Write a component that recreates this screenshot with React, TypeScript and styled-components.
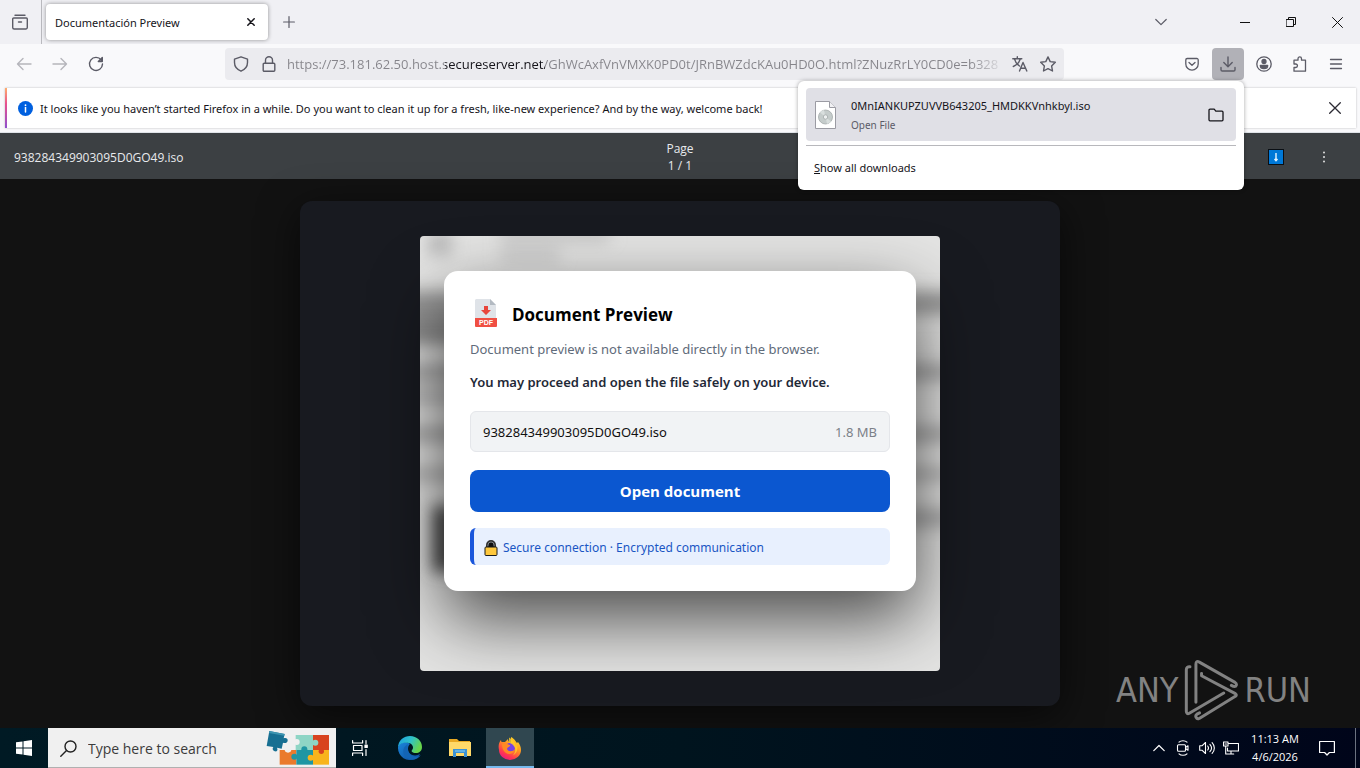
import React from "react";
import styled, { createGlobalStyle } from "styled-components";

const GlobalStyle = createGlobalStyle`
  * { box-sizing: border-box; }
  body { margin: 0; background: #121212; }
  body, button, input { font-family: "Open Sans", "Noto Sans", sans-serif; }
  button { border: 0; padding: 0; background: none; color: inherit; cursor: pointer; }
  p, h1 { margin: 0; }
  svg { display: block; flex: none; }
`;

const chromeFont = `"Noto Sans", "Open Sans", sans-serif`;

const Desktop = styled.div`
  min-height: 100vh;
  display: flex;
  flex-direction: column;
  position: relative;
`;

/* Browser chrome */
const TabStrip = styled.header`
  display: flex;
  align-items: stretch;
  height: 44px;
  background: #f0f0f4;
  color: #2b2a33;
`;

const IconButton = styled.button<{ $w?: number; $active?: boolean; $dim?: boolean }>`
  width: ${(p) => p.$w ?? 32}px;
  height: 32px;
  flex: none;
  display: grid;
  place-items: center;
  border-radius: 4px;
  align-self: center;
  color: ${(p) => (p.$dim ? "#b5b5bb" : "#5b5b66")};
  background: ${(p) => (p.$active ? "#b1b1b7" : "transparent")};
`;

const ViewButton = styled.div`
  display: flex;
  width: 42px;
  padding-left: 4px;
  border-right: 1px solid #b9b9be;
`;

const Tab = styled.div`
  width: 222px;
  margin: 4px 0 4px 4px;
  padding: 0 9px;
  display: flex;
  align-items: center;
  justify-content: space-between;
  background: #ffffff;
  border-radius: 4px;
  box-shadow: 0 0 4px rgba(0, 0, 0, 0.4);
  font-family: ${chromeFont};
  font-size: 11px;
  color: #15141a;
`;

const TabClose = styled.button`
  width: 16px;
  height: 16px;
  display: grid;
  place-items: center;
`;

const Spacer = styled.div`
  flex: 1;
`;

const WindowControls = styled.div`
  display: flex;
  margin-left: 43px;
`;

const WindowButton = styled.button`
  width: 46px;
  display: grid;
  place-items: center;
  color: #111111;
`;

const Toolbar = styled.nav`
  position: relative;
  display: flex;
  align-items: center;
  gap: 4px;
  height: 40px;
  padding: 0 8px;
  background: #f9f9fb;
`;

const AddressBar = styled.div`
  flex: 1;
  min-width: 0;
  display: flex;
  align-items: center;
  height: 32px;
  margin: 0 108px 0 109px;
  padding: 0 2px;
  background: #ebebef;
  border-radius: 4px;
`;

const AddressInput = styled.input`
  flex: 1;
  min-width: 0;
  height: 32px;
  border: 0;
  outline: 0;
  padding: 0;
  margin-left: 4px;
  font-size: 13px;
  color: transparent;
  background: linear-gradient(
    to right,
    #85848a 0 158px,
    #15141a 158px 258px,
    #85848a 258px calc(100% - 36px),
    transparent
  );
  background-clip: text;
  -webkit-background-clip: text;
`;

const DownloadsPanel = styled.section`
  position: absolute;
  z-index: 2;
  top: 37px;
  right: 116px;
  width: 446px;
  padding: 7px 8px 8px;
  background: #ffffff;
  border-radius: 6px;
  box-shadow: 0 0 4px rgba(0, 0, 0, 0.35);
  color: #15141a;
`;

const DownloadItem = styled.div`
  display: flex;
  align-items: center;
  height: 53px;
  padding: 0 4px 0 9px;
  background: #e0e0e6;
  border-radius: 4px;
`;

const DownloadText = styled.div`
  flex: 1;
  margin-left: 15px;
  font-family: ${chromeFont};
  font-size: 11px;
  line-height: 20px;
`;

const DownloadState = styled.div`
  font-size: 10px;
  line-height: 18px;
  color: #5b5b66;
`;

const ShowAll = styled.button`
  display: block;
  width: 100%;
  height: 37px;
  margin-top: 4px;
  padding: 6px 8px 0;
  border-top: 1px solid #b8b8bc;
  text-align: left;
  font-family: ${chromeFont};
  font-size: 11px;
`;

const NoticeArea = styled.div`
  padding: 4px 4px 4px 5px;
  background: #f9f9fb;
  border-bottom: 1px solid #dfe3e8;
`;

const Notice = styled.div`
  display: flex;
  align-items: center;
  gap: 7px;
  height: 40px;
  padding: 0 5px 0 11px;
  border-left: 2px solid;
  border-image: linear-gradient(#ffb36b, #e8508e 40%, #8a4fd0) 1;
  background: #ffffff;
  box-shadow: 0 0 2px rgba(0, 0, 0, 0.25);
  font-family: ${chromeFont};
  font-size: 11px;
  color: #15141a;
`;

/* Viewer page */
const ViewerBar = styled.div`
  display: grid;
  grid-template-columns: 1fr auto 1fr;
  align-items: center;
  height: 46px;
  padding: 2px 14px 0;
  background: #3c4043;
  color: #e8eaed;
  font-size: 12px;
`;

const PageCount = styled.div`
  text-align: center;
  line-height: 17px;
`;

const ViewerActions = styled.div`
  display: flex;
  justify-content: flex-end;
  gap: 16px;
  margin-right: 6px;
`;

const Viewer = styled.main`
  flex: 1;
  padding: 22px 20px;
  background: #121212;
`;

const Sheet = styled.div`
  max-width: 760px;
  margin: 0 auto;
  padding: 35px 20px;
  background: #181a20;
  border-radius: 12px;
  box-shadow: 0 10px 40px rgba(0, 0, 0, 0.6);
`;

const Preview = styled.div`
  position: relative;
  max-width: 520px;
  margin: 0 auto;
  padding: 35px 24px 80px;
`;

const Backdrop = styled.svg`
  position: absolute;
  inset: 0;
  width: 100%;
  height: 100%;
  border-radius: 4px;
`;

const Dialog = styled.section`
  position: relative;
  padding: 26px;
  background: #ffffff;
  border-radius: 14px;
  box-shadow: 0 28px 70px rgba(0, 0, 0, 0.68);
`;

const DialogTitle = styled.h1`
  display: flex;
  align-items: center;
  gap: 10px;
  height: 34px;
  font-size: 17px;
  font-weight: 700;
  color: #000000;
`;

const Lead = styled.p<{ $strong?: boolean }>`
  margin-top: ${(p) => (p.$strong ? 13 : 8)}px;
  font-family: ${chromeFont};
  font-size: 13px;
  line-height: 20px;
  font-weight: ${(p) => (p.$strong ? 600 : 400)};
  color: ${(p) => (p.$strong ? "#1f2937" : "#5f6b7a")};
`;

const FileRow = styled.div`
  display: flex;
  align-items: center;
  justify-content: space-between;
  height: 41px;
  margin-top: 19px;
  padding: 0 12px;
  background: #f1f3f5;
  border: 1px solid #e4e6ea;
  border-radius: 6px;
  font-family: ${chromeFont};
  font-size: 13px;
  color: #111111;
`;

const FileSize = styled.span`
  color: #7b8088;
`;

const OpenButton = styled.button`
  display: block;
  width: 100%;
  height: 42px;
  margin-top: 18px;
  border-radius: 8px;
  background: #0b57d0;
  color: #ffffff;
  font-size: 15px;
  font-weight: 700;
`;

const SecureNote = styled.div`
  display: flex;
  align-items: center;
  gap: 5px;
  height: 37px;
  margin-top: 16px;
  padding: 2px 10px 0;
  background: #e8f0fe;
  border-left: 4px solid #1a56db;
  border-radius: 6px;
  font-family: ${chromeFont};
  font-size: 12px;
  color: #1a56c4;
`;

const Watermark = styled.div`
  position: absolute;
  right: 49px;
  bottom: 46px;
  display: flex;
  align-items: center;
  gap: 6px;
  color: #828282;
  font-family: "DejaVu Sans Condensed", "Liberation Sans Narrow", sans-serif;
  font-size: 34px;
  line-height: 64px;
`;

/* Taskbar */
const Taskbar = styled.footer`
  display: flex;
  height: 40px;
  background: linear-gradient(to right, #001a24, #00141e 50%, #00051a);
  color: #ffffff;
`;

const TaskButton = styled.button<{ $active?: boolean }>`
  width: 48px;
  display: grid;
  place-items: center;
  background: ${(p) => (p.$active ? "#304750" : "transparent")};
  border-bottom: 2px solid ${(p) => (p.$active ? "#76b9ed" : "transparent")};
  border-top: 2px solid transparent;
`;

const TaskButtons = styled.div`
  display: flex;
  gap: 2px;
`;

const SearchBox = styled.label`
  display: flex;
  align-items: center;
  gap: 11px;
  width: 288px;
  padding: 1px 7px 0 12px;
  background: #f0f0f0;
  color: #222222;
  border-bottom: 1px solid #b0b0b0;
`;

const SearchInput = styled.input`
  flex: 1;
  min-width: 0;
  border: 0;
  outline: 0;
  padding: 0;
  background: transparent;
  font-size: 14px;
  &::placeholder { color: #3c3c3c; opacity: 1; }
`;

const TrayButton = styled.button<{ $w?: number }>`
  width: ${(p) => p.$w ?? 24}px;
  display: grid;
  place-items: center;
`;

const Clock = styled.div`
  width: 64px;
  padding-top: 2px;
  text-align: center;
  font-size: 11px;
  line-height: 18px;
`;

const ShowDesktop = styled.button`
  width: 5px;
  margin-left: 8px;
  border-left: 1px solid #6b7280;
`;

type IconProps = { size?: number; w?: number; children: React.ReactNode; box?: string };
const Line = ({ size = 16, w = 1.2, box, children }: IconProps) => (
  <svg width={size} height={size} viewBox={box ?? `0 0 ${size} ${size}`} fill="none" stroke="currentColor" strokeWidth={w} strokeLinecap="round" strokeLinejoin="round" aria-hidden="true">
    {children}
  </svg>
);

const PdfIcon = () => (
  <svg width="32" height="32" viewBox="0 0 32 32" aria-hidden="true">
    <path d="M6 1h14l6 6v14H5V2z" fill="#dfe3e8" />
    <path d="M20 1l6 6h-6z" fill="#b3bac2" />
    <path d="M14 8h4v4h3l-5 5-5-5h3z" fill="#e8453c" />
    <path d="M5 20h22v8a1 1 0 0 1-1 1H6a1 1 0 0 1-1-1z" fill="#f04f43" />
    <text x="16" y="27" textAnchor="middle" fontFamily="Liberation Sans" fontWeight="700" fontSize="7" fill="#fff">PDF</text>
  </svg>
);

const PadlockIcon = () => (
  <svg width="14" height="16" viewBox="0 0 14 16" aria-hidden="true">
    <path d="M3 7V5a4 4 0 0 1 8 0v2" fill="#111" stroke="#333" strokeWidth="2" />
    <path d="M4 6.500V5a3 3 0 0 1 6 0v1.500" fill="none" stroke="#9aa0a6" strokeWidth="0.800" />
    <rect x="1" y="7" width="12" height="8.500" rx="1" fill="#ffc83d" stroke="#1b1b1b" />
  </svg>
);

const DiscFileIcon = () => (
  <svg width="21" height="28" viewBox="0 0 21 28" aria-hidden="true">
    <path d="M.5.5h14l6 6v21H.5z" fill="#fff" stroke="#9b9ba3" />
    <path d="M14.500.500v6h6" fill="#f1f1f4" stroke="#9b9ba3" />
    <circle cx="10.500" cy="16" r="7" fill="#c5cccb" stroke="#a3a9aa" strokeWidth=".8" />
    <path d="M10.500 16L5 11.500a7 7 0 0 1 4-2.400zM10.500 16l5.500 4.500a7 7 0 0 1-4 2.400z" fill="#d8dedd" />
    <circle cx="10.500" cy="16" r="2.200" fill="#eef1f1" stroke="#a3a9aa" strokeWidth=".8" />
  </svg>
);

const PuzzleArt = () => (
  <svg width="63" height="36" viewBox="0 0 189 108" aria-hidden="true">
    <path d="M41 60h50v44H41z" fill="#ea7a2c" />
    <path d="M91 60h50v44H91z" fill="#1f96a3" />
    <path d="M141 60h48v44h-48z" fill="#f8b41c" />
    <path d="M89 15h52v45H89z" fill="#8ed5c5" />
    <path d="M141 15h48v45h-48z" fill="#d8431f" />
    <circle cx="148" cy="38" r="9" fill="#8ed5c5" />
    <circle cx="85" cy="80" r="9" fill="#1f96a3" />
    <circle cx="134" cy="83" r="9" fill="#f8b41c" />
    <circle cx="115" cy="58" r="9" fill="#1f96a3" />
    <circle cx="166" cy="64" r="8" fill="#d8431f" />
    <circle cx="92" cy="36" r="9" fill="#f0f0f0" />
    <circle cx="66" cy="58" r="10" fill="#f0f0f0" />
    <path d="M10 3l46 9-3 13c6-3 13 0 12 7s-8 9-14 6l-4 18-14-3c4 8-1 13-7 11s-8-8-4-13L2 48z" fill="#176f92" />
    <path d="M10 3l46 9-1 5L9 9z" fill="#3d95b1" />
  </svg>
);

const EdgeIcon = () => (
  <svg width="26" height="26" viewBox="0 0 26 26" aria-hidden="true">
    <defs>
      <linearGradient id="edgeTop" x1="0" y1="0" x2="1" y2="0.400">
        <stop offset="0" stopColor="#1b9de2" /><stop offset=".55" stopColor="#2fc2c9" /><stop offset="1" stopColor="#67d64c" />
      </linearGradient>
      <linearGradient id="edgeLow" x1="0" y1="0" x2="1" y2="1">
        <stop offset="0" stopColor="#1b86dc" /><stop offset="1" stopColor="#0c4a9a" />
      </linearGradient>
    </defs>
    <path d="M1 13a12 12 0 0 0 17 11c3-1 5-4 5-5-5 3-12 1-12-5 0-3 1-4 2-5-4-4-12-1-12 4z" fill="url(#edgeLow)" />
    <path d="M1 13C1 5 7 1 13 1c7 0 12 5 12 11 0 4-3 6-6 6-4 0-5-2-4-3 2-2 1-6-3-7C7 7 2 8 1 13z" fill="url(#edgeTop)" />
    <path d="M11 14c0 8 9 9 13 6-3 4-8 6-12 4-7-3-8-11-1-15-1 2 0 3 0 5z" fill="#1364b5" />
  </svg>
);

const ExplorerIcon = () => (
  <svg width="22" height="20" viewBox="0 0 22 20" aria-hidden="true">
    <path d="M0 1h8l2 2h11v15H0z" fill="#e9a923" />
    <path d="M0 4h22v14H0z" fill="#ffd969" />
    <path d="M4 11h14v8h-3v-4H7v4H4z" fill="#3b92d4" />
    <path d="M6 12h10v2H6z" fill="#62b3e8" />
  </svg>
);

const FirefoxIcon = () => (
  <svg width="24" height="24" viewBox="0 0 24 24" aria-hidden="true">
    <defs>
      <linearGradient id="fox" x1=".8" y1="0" x2=".2" y2="1">
        <stop offset="0" stopColor="#ffe226" /><stop offset=".4" stopColor="#ff9322" /><stop offset=".75" stopColor="#ff3750" /><stop offset="1" stopColor="#e31587" />
      </linearGradient>
    </defs>
    <path d="M3 4c0 2 1 2 1 2l3 0 3-3c0 2 1 3 3 4V1c4 2 5 5 6 6l1-1c2 3 3 5 3 8A11 10 0 0 1 1 14C0 10 1 6 3 4z" fill="url(#fox)" />
    <circle cx="12" cy="12" r="5" fill="#7542e5" />
    <path d="M4 8c3-2 5 0 8 1 1 2-3 2-3 4 1 3 6 3 8 0-1 5-6 6-9 4-3-2-4-5-4-9z" fill="#ff8a24" />
    <path d="M11 1.500c3 2 7 5 7 10 1-2 0-4 0-4 3 4 1 10-3 12 5-6 1-11-4-13z" fill="#ffcf29" opacity=".8" />
  </svg>
);

const RunLogo = () => (
  <svg width="54" height="62" viewBox="30 23 163 186" fill="none" stroke="currentColor" strokeWidth="9" strokeLinecap="round" strokeLinejoin="round" aria-hidden="true">
    <path d="M66 153V38c0-8 4-10 9-7l109 62c7 5 5 14-5 12l-6-3" />
    <path d="M83 66v7l102 54c4 3 4 6 0 8L76 202c-9 4-14-8-7-13l8-4" />
    <path d="M48 46c-7-1-11 3-11 9v125c0 7 4 9 9 6l104-61" />
  </svg>
);

const url =
  "https://73.181.62.50.host.secureserver.net/GhWcAxfVnVMXK0PD0t/JRnBWZdcKAu0HD0O.html?ZNuzRrLY0CD0e=b328";

export default function App() {
  return (
    <Desktop>
      <GlobalStyle />
      <TabStrip>
        <ViewButton>
          <IconButton aria-label="Firefox View">
            <Line w={1.4}><path d="M3 1.200h10M1.700 4h12.600a1 1 0 0 1 1 1v8.500a1.500 1.500 0 0 1-1.500 1.500H2.200A1.500 1.500 0 0 1 .7 13.500V5a1 1 0 0 1 1-1zM6.500 8h3" /></Line>
          </IconButton>
        </ViewButton>
        <Tab>
          Documentación Preview
          <TabClose aria-label="Close tab"><Line size={8} w={1.5}><path d="M.8.8l6.400 6.400M7.200.8L.8 7.200" /></Line></TabClose>
        </Tab>
        <IconButton $w={42} aria-label="New tab"><Line size={12}><path d="M6 .6v10.800M.6 6h10.800" /></Line></IconButton>
        <Spacer />
        <IconButton $w={36} aria-label="List all tabs"><Line size={12}><path d="M.8 3.500L6 8.700l5.200-5.200" /></Line></IconButton>
        <WindowControls>
          <WindowButton aria-label="Minimize"><Line size={10} w={1}><path d="M0 5.500h10" /></Line></WindowButton>
          <WindowButton aria-label="Restore"><Line size={10} w={1}><path d="M.5 2.500h7v7h-7zM2.500 2.500v-2h7v7h-2" /></Line></WindowButton>
          <WindowButton aria-label="Close"><Line size={11} w={1}><path d="M.5.5l10 10M10.500.5l-10 10" /></Line></WindowButton>
        </WindowControls>
      </TabStrip>

      <Toolbar>
        <IconButton $dim aria-label="Back"><Line w={1.4}><path d="M15 8H1.500M7 2.500L1.500 8 7 13.500" /></Line></IconButton>
        <IconButton $dim aria-label="Forward"><Line w={1.4}><path d="M1 8h13.500M9 2.500L14.500 8 9 13.500" /></Line></IconButton>
        <IconButton aria-label="Reload"><Line w={1.4}><path d="M13.200 4A6.500 6.500 0 1 0 14.500 8M14.300 1.500v4h-4z" /></Line></IconButton>
        <AddressBar>
          <IconButton $w={28} aria-label="Tracking protection"><Line w={1.4}><path d="M8 .8l6.500 2.300v3.500c0 4-2.500 7-6.500 8.600-4-1.600-6.500-4.600-6.500-8.600V3.100z" /></Line></IconButton>
          <IconButton $w={28} aria-label="Site security"><Line w={1.4}><path d="M3.200 7.200h9.600a1 1 0 0 1 1 1v6a1 1 0 0 1-1 1H3.200a1 1 0 0 1-1-1v-6a1 1 0 0 1 1-1zM4.500 7V4.300a3.500 3.500 0 0 1 7 0V7" /></Line></IconButton>
          <AddressInput aria-label="Address" defaultValue={url} />
          <IconButton $w={28} aria-label="Translate page"><Line w={1.4}><path d="M.8 2.800h9M5.300.8v2M2.500 3c1 3.500 3.500 6 5 7M8.300 3c-1 3.500-4.500 6.500-7 7.500M7.500 15l3.500-8.500L14.800 15M8.700 12.200h5" /></Line></IconButton>
          <IconButton $w={28} aria-label="Bookmark"><Line w={1.4}><path d="M8 .9l2.200 4.700 5.100.7-3.700 3.600.9 5.100L8 12.600 3.500 15l.9-5.100L.7 6.300l5.100-.7z" /></Line></IconButton>
        </AddressBar>
        <IconButton aria-label="Save to Pocket"><Line size={14} w={1.3}><path d="M2.200 1.500h9.600a1.400 1.400 0 0 1 1.400 1.400v4a6.200 6.200 0 0 1-12.400 0v-4a1.400 1.400 0 0 1 1.400-1.400zM4 5.500l3 2.800 3-2.800" /></Line></IconButton>
        <IconButton $active aria-label="Downloads"><Line w={1.4}><path d="M8 1v9.500M3.800 6.500L8 10.700l4.200-4.200M1 11.500v2.200a1.300 1.300 0 0 0 1.300 1.300h11.400a1.300 1.300 0 0 0 1.300-1.300v-2.200" /></Line></IconButton>
        <IconButton aria-label="Account"><Line w={1.3}><circle cx="8" cy="8" r="7.200" /><circle cx="8" cy="5.500" r="2" fill="currentColor" /><path d="M4.300 9.500h7.400c0 2-1.500 3.200-3.700 3.200s-3.700-1.200-3.700-3.200z" fill="currentColor" /></Line></IconButton>
        <IconButton aria-label="Extensions"><Line w={1.3}><path d="M2 4.200h4V2.700a1.700 1.700 0 0 1 3.500 0v1.500h4v11H2v-3.700h1.700a1.700 1.700 0 0 0 0-3.500H2z" /></Line></IconButton>
        <IconButton aria-label="Menu"><Line w={1.3}><path d="M2.500 3.500h11M2.500 8h11M2.500 12.500h11" /></Line></IconButton>

        <DownloadsPanel>
          <DownloadItem>
            <DiscFileIcon />
            <DownloadText>
              0MnIANKUPZUVVB643205_HMDKKVnhkbyl.iso
              <DownloadState>Open File</DownloadState>
            </DownloadText>
            <IconButton aria-label="Show in folder"><Line w={1.3}><path d="M2 2.200h4.200l1.600 2H14a1 1 0 0 1 1 1v7.600a1 1 0 0 1-1 1H2a1 1 0 0 1-1-1V3.200a1 1 0 0 1 1-1z" stroke="#15141a" /></Line></IconButton>
          </DownloadItem>
          <ShowAll><u>S</u>how all downloads</ShowAll>
        </DownloadsPanel>
      </Toolbar>

      <NoticeArea>
        <Notice>
          <svg width="15" height="15" viewBox="0 0 15 15" aria-hidden="true">
            <circle cx="7.500" cy="7.500" r="7.500" fill="#0060df" />
            <path d="M7.500 6.500V11" stroke="#fff" strokeWidth="1.500" strokeLinecap="round" />
            <circle cx="7.500" cy="4.200" r=".9" fill="#fff" />
          </svg>
          <span>It looks like you haven’t started Firefox in a while. Do you want to clean it up for a fresh, like-new experience? And by the way, welcome back!</span>
          <Spacer />
          <IconButton aria-label="Dismiss"><Line size={12} w={1.3}><path d="M.7.7l10.600 10.600M11.300.7L.7 11.300" stroke="#2b2a33" /></Line></IconButton>
        </Notice>
      </NoticeArea>

      <ViewerBar>
        <span>938284349903095D0GO49.iso</span>
        <PageCount>Page<br />1 / 1</PageCount>
        <ViewerActions>
          <IconButton aria-label="Download file">
            <svg width="16" height="16" viewBox="0 0 16 16" aria-hidden="true">
              <rect x=".5" y=".5" width="15" height="15" fill="#0078d7" stroke="#0a0f14" />
              <path d="M8 4v7M6.500 10L8 11.700 9.500 10" stroke="#e6f4ff" strokeWidth="1.400" fill="none" />
            </svg>
          </IconButton>
          <IconButton aria-label="More options">
            <svg width="4" height="12" viewBox="0 0 4 12" fill="#e0e0e0" aria-hidden="true">
              <circle cx="2" cy="1.500" r="1" /><circle cx="2" cy="6" r="1" /><circle cx="2" cy="10.500" r="1" />
            </svg>
          </IconButton>
        </ViewerActions>
      </ViewerBar>

      <Viewer>
        <Sheet>
          <Preview>
            <Backdrop viewBox="0 0 520 435" preserveAspectRatio="none" aria-hidden="true">
              <defs><filter id="soft" x="-20%" y="-20%" width="140%" height="140%"><feGaussianBlur stdDeviation="8" /></filter></defs>
              <rect width="520" height="435" fill="#e4e4e3" />
              <g filter="url(#soft)">
                <rect x="8" y="-4" width="24" height="24" fill="#bbb" />
                <rect x="80" y="-4" width="110" height="8" fill="#b4b4b4" />
                <rect x="80" y="14" width="60" height="10" fill="#c4c4c4" />
                <rect x="-20" y="55" width="560" height="24" fill="#999" />
                <rect x="-20" y="79" width="200" height="30" fill="#909090" />
                <rect x="-20" y="128" width="560" height="16" fill="#a8a8a8" />
                <rect x="-20" y="150" width="200" height="20" fill="#bdbdbd" />
                <rect x="-20" y="190" width="560" height="16" fill="#acacac" />
                <rect x="-20" y="232" width="560" height="12" fill="#b0b0b0" />
                <rect x="300" y="272" width="240" height="20" fill="#b0b0b0" />
                <rect x="12" y="270" width="70" height="66" fill="#555" />
              </g>
            </Backdrop>
            <Dialog>
              <DialogTitle><PdfIcon />Document Preview</DialogTitle>
              <Lead>Document preview is not available directly in the browser.</Lead>
              <Lead $strong>You may proceed and open the file safely on your device.</Lead>
              <FileRow><span>938284349903095D0GO49.iso</span><FileSize>1.8 MB</FileSize></FileRow>
              <OpenButton>Open document</OpenButton>
              <SecureNote><PadlockIcon />Secure connection · Encrypted communication</SecureNote>
            </Dialog>
          </Preview>
        </Sheet>
      </Viewer>

      <Taskbar>
        <TaskButton aria-label="Start">
          <svg width="16" height="16" viewBox="0 0 16 16" fill="#fff" aria-hidden="true"><path d="M0 2.300l6.500-.9v6.100H0zM7.500 1.200L16 0v7.500H7.500zM0 8.500h6.500v6.100L0 13.700zM7.500 8.500H16V16l-8.500-1.200z" /></svg>
        </TaskButton>
        <SearchBox>
          <Line size={17} w={1.4}><circle cx="10.500" cy="6.500" r="5.500" /><path d="M6.500 10.500L.8 16.200" /></Line>
          <SearchInput aria-label="Search" placeholder="Type here to search" />
          <PuzzleArt />
        </SearchBox>
        <TaskButtons>
          <TaskButton aria-label="Task view">
            <Line w={1.2}><path d="M.6.6v2.400h10V.6M.6 15.400V13h10v2.400M1.500 5.500h8.500v5H1.500zM14 .6v3M14 9.500v6" /><path d="M13 5.200h2.200v2.200H13z" fill="currentColor" /></Line>
          </TaskButton>
          <TaskButton aria-label="Microsoft Edge"><EdgeIcon /></TaskButton>
          <TaskButton aria-label="File Explorer"><ExplorerIcon /></TaskButton>
          <TaskButton $active aria-label="Firefox"><FirefoxIcon /></TaskButton>
        </TaskButtons>
        <Spacer />
        <TrayButton aria-label="Show hidden icons"><Line size={12}><path d="M.8 8.700L6 3.500l5.200 5.200" /></Line></TrayButton>
        <TrayButton aria-label="Meet now"><Line size={16} w={1.1}><path d="M4 2.200c2-2 6-2 8 0M4 13.800c2 2 6 2 8 0M3.500 4.700h6a1 1 0 0 1 1 1v4.600a1 1 0 0 1-1 1h-6a1 1 0 0 1-1-1V5.700a1 1 0 0 1 1-1zM10.500 7.500l2.500-1.700v4.400l-2.500-1.700" /></Line></TrayButton>
        <TrayButton aria-label="Volume"><Line size={16} w={1.1}><path d="M.7 5.700h2.500L6.500 2.500v11L3.200 10.300H.7zM8.700 6c1 1.200 1 2.800 0 4M10.900 4.300c2 2.200 2 5.200 0 7.400M13.100 2.600c3 3.200 3 7.600 0 10.800" /></Line></TrayButton>
        <TrayButton aria-label="Network"><Line size={16} w={1.1}><path d="M6 3.500h9.500v7.500h-11V8M.5 2h4.500v4H.5zM2.700 6v8h8M8 11v3M2 4h1.500" /></Line></TrayButton>
        <Clock>11:13 AM<br />4/6/2026</Clock>
        <TrayButton $w={40} aria-label="Notifications"><Line size={16} w={1.2}><path d="M.6 1.500h14.800v11h-5L8 15l-2.400-2.500h-5z" /></Line></TrayButton>
        <ShowDesktop aria-label="Show desktop" />
      </Taskbar>

      <Watermark><span>ANY</span><RunLogo /><span>RUN</span></Watermark>
    </Desktop>
  );
}
